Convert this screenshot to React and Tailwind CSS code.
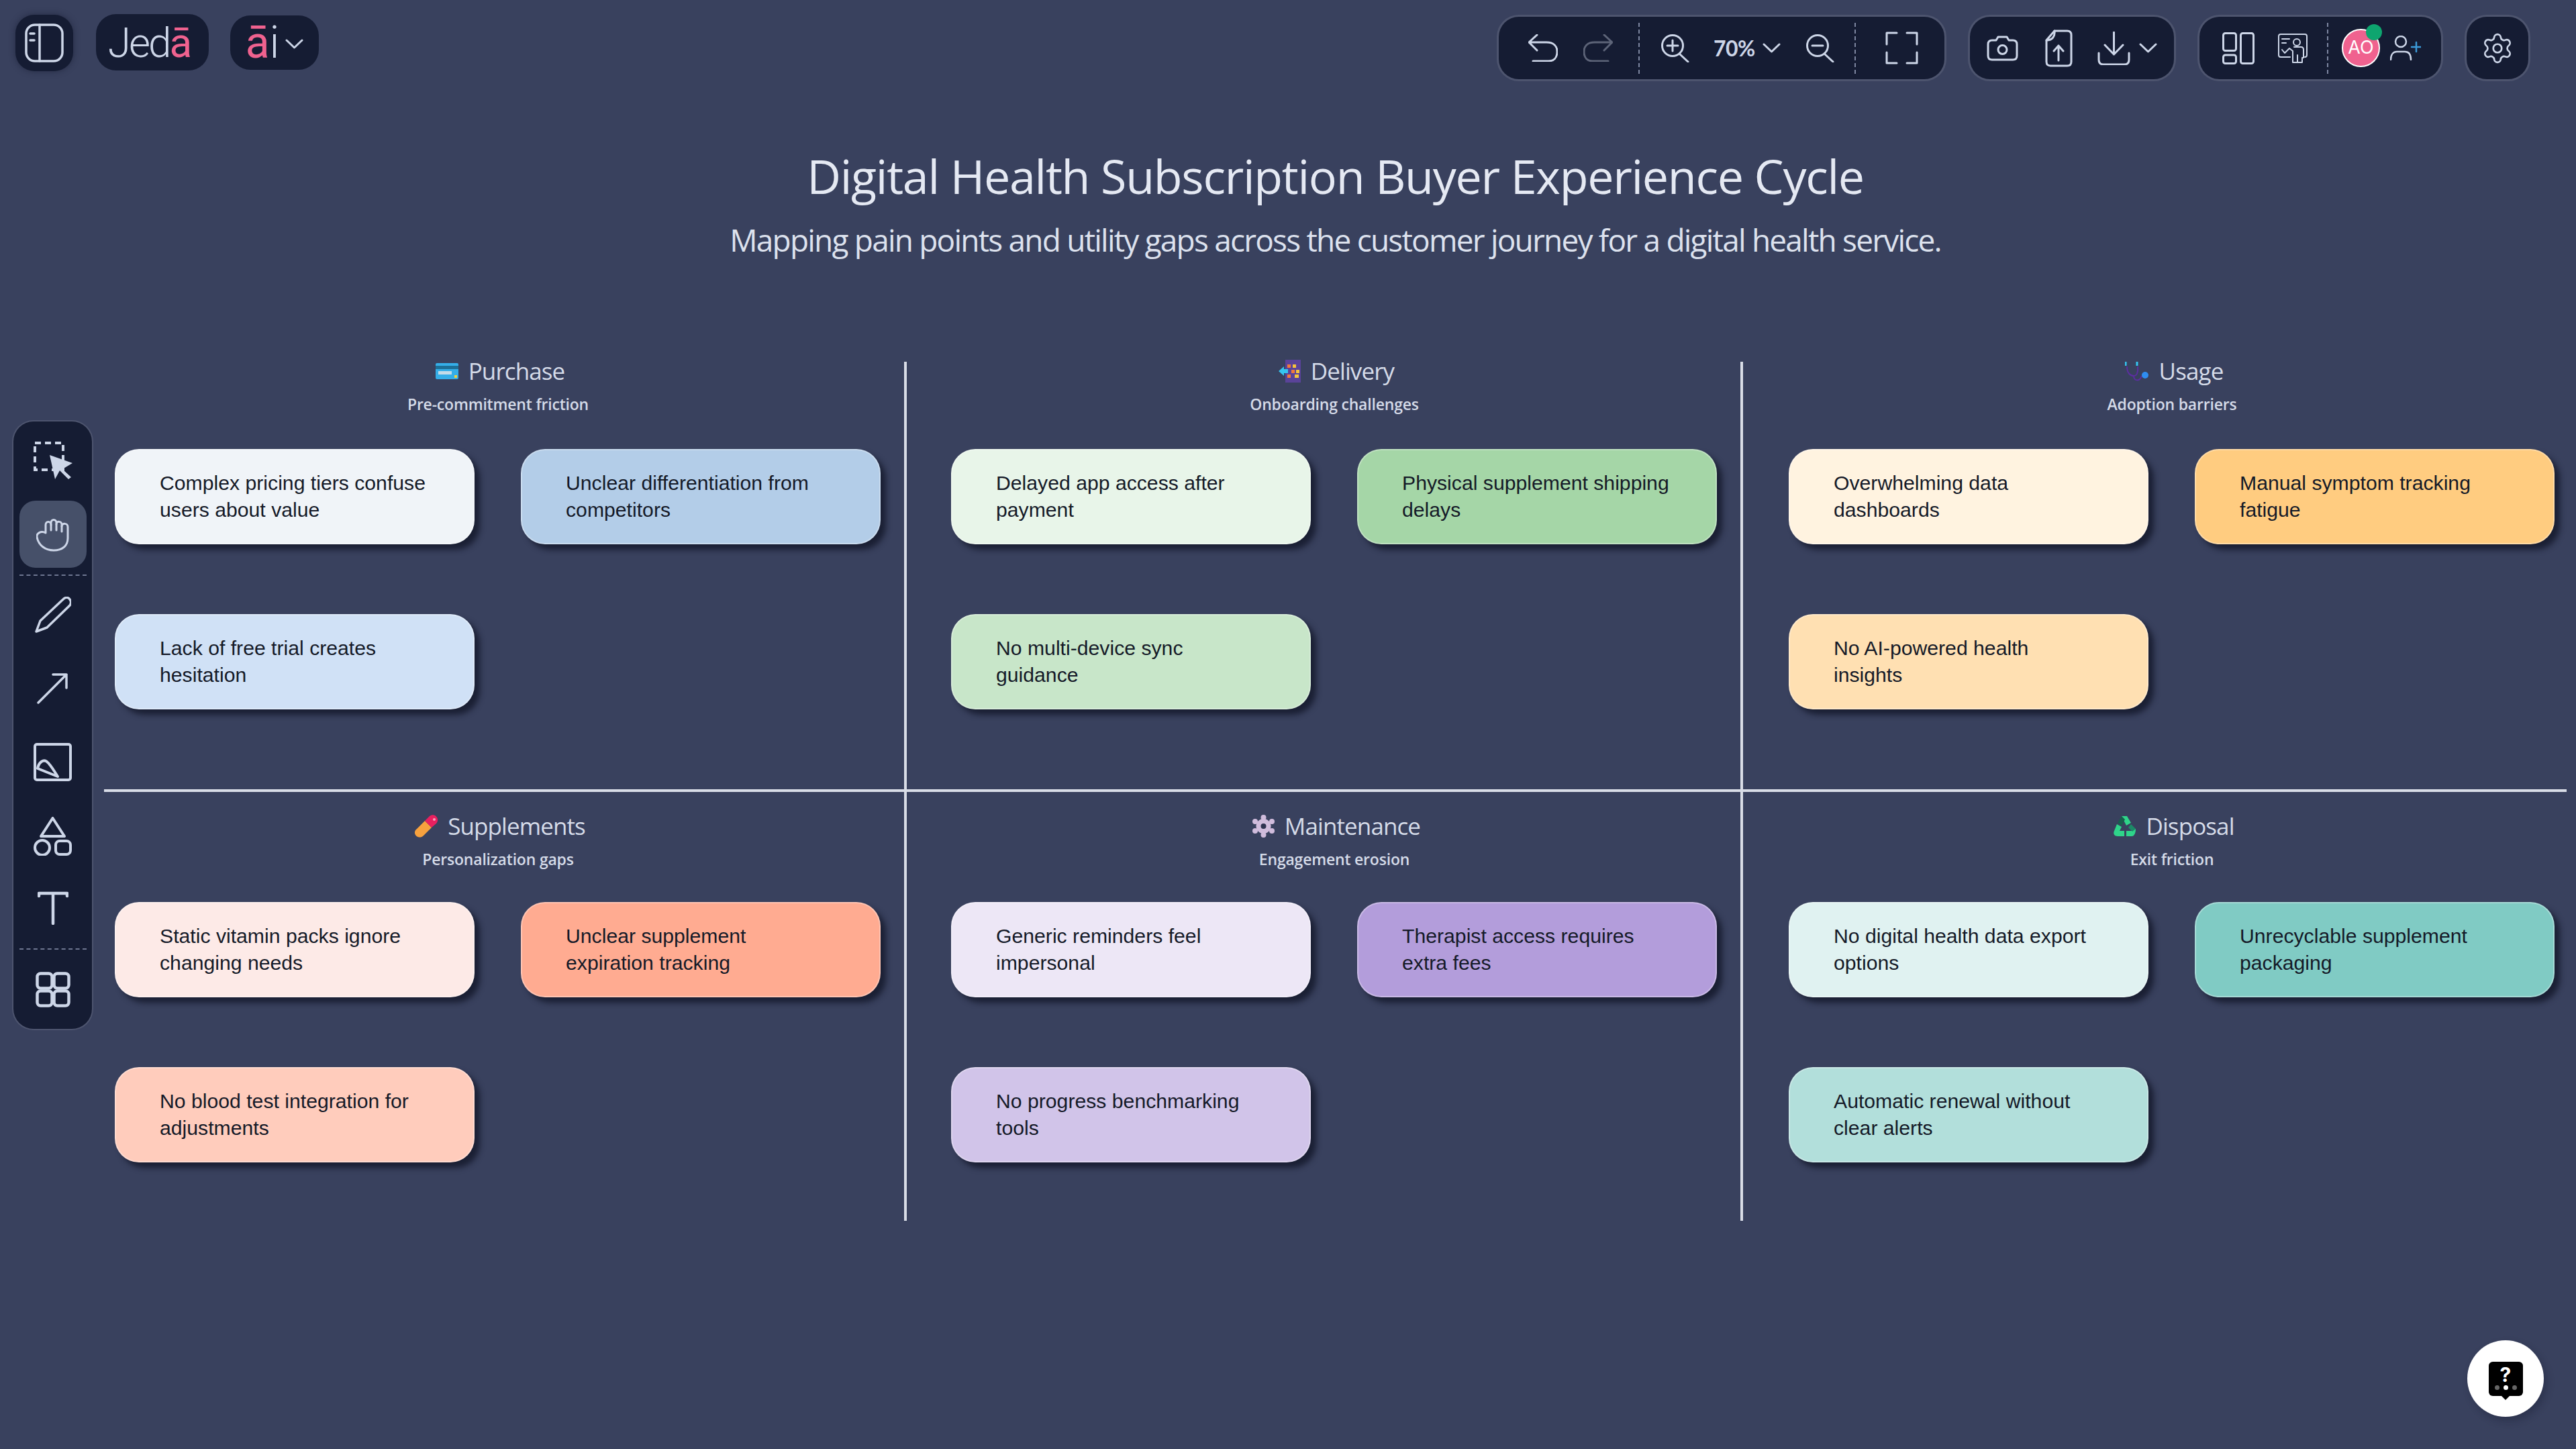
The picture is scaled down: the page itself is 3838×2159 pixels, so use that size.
import { Settings } from 'lucide-react';

const rows = [
  [
    {
      title: 'Purchase', sub: 'Pre-commitment friction', icon: 'card', pad: 'pl-[16px]',
      notes: [
        ['Complex pricing tiers confuse\nusers about value', 'bg-[#f0f4f8]'],
        ['Unclear differentiation from\ncompetitors', 'bg-[#b3cde8]'],
        ['Lack of free trial creates\nhesitation', 'bg-[#d0e1f6]'],
      ],
    },
    {
      title: 'Delivery', sub: 'Onboarding challenges', icon: 'abacus', pad: 'pl-[66px]',
      notes: [
        ['Delayed app access after\npayment', 'bg-[#e8f5e9]'],
        ['Physical supplement shipping\ndelays', 'bg-[#a5d6a7]'],
        ['No multi-device sync\nguidance', 'bg-[#c8e6c9]'],
      ],
    },
    {
      title: 'Usage', sub: 'Adoption barriers', icon: 'stetho', pad: 'pl-[68px]',
      notes: [
        ['Overwhelming data\ndashboards', 'bg-[#fff3e0]'],
        ['Manual symptom tracking\nfatigue', 'bg-[#ffcc80]'],
        ['No AI-powered health\ninsights', 'bg-[#ffe0b2]'],
      ],
    },
  ],
  [
    {
      title: 'Supplements', sub: 'Personalization gaps', icon: 'pill', pad: 'pl-[16px]',
      notes: [
        ['Static vitamin packs ignore\nchanging needs', 'bg-[#fdeae7]'],
        ['Unclear supplement\nexpiration tracking', 'bg-[#ffab91]'],
        ['No blood test integration for\nadjustments', 'bg-[#ffccbc]'],
      ],
    },
    {
      title: 'Maintenance', sub: 'Engagement erosion', icon: 'gear', pad: 'pl-[66px]',
      notes: [
        ['Generic reminders feel\nimpersonal', 'bg-[#ede7f6]'],
        ['Therapist access requires\nextra fees', 'bg-[#b39ddb]'],
        ['No progress benchmarking\ntools', 'bg-[#d1c4e9]'],
      ],
    },
    {
      title: 'Disposal', sub: 'Exit friction', icon: 'recycle', pad: 'pl-[68px]',
      notes: [
        ['No digital health data export\noptions', 'bg-[#e0f2f1]'],
        ['Unrecyclable supplement\npackaging', 'bg-[#80cbc4]'],
        ['Automatic renewal without\nclear alerts', 'bg-[#b2dfdb]'],
      ],
    },
  ],
];

const Line = ({ w, h, children, sw = 3, className = '' }) => (
  <svg width={w} height={h} viewBox={`0 0 ${w} ${h}`} fill="none" stroke="currentColor" strokeWidth={sw} strokeLinecap="round" strokeLinejoin="round" className={`shrink-0 ${className}`}>
    {children}
  </svg>
);

const Chevron = ({ className = '' }) => (
  <Line w={27} h={15} className={className}><path d="M2 2 L13.5 13 L25 2" /></Line>
);

const Dash = ({ className = '' }) => <div className={`h-[76px] border-l-2 border-dashed border-[#7d86a0] ${className}`} />;

const Emoji = ({ name }) => {
  if (name === 'card') return (
    <svg width="34" height="24" viewBox="0 0 34 24" className="shrink-0">
      <rect width="34" height="24" rx="2" fill="#35aee8" />
      <rect y="4" width="34" height="5" fill="#1d6f96" />
      <rect x="4" y="12" width="20" height="5" fill="#c3dbe8" />
      <rect x="28" y="18" width="4" height="4" fill="#f4d13d" />
    </svg>
  );
  if (name === 'abacus') return (
    <svg width="33" height="34" viewBox="0 0 33 34" className="shrink-0">
      <rect x="10" width="23" height="34" fill="#5a4399" />
      <g fill="#f2793a">
        <rect x="13" y="7" width="5" height="5" /><rect x="13" y="22" width="5" height="5" />
      </g>
      <g fill="#f6c33b">
        <rect x="21" y="7" width="5" height="5" /><rect x="19" y="15" width="5" height="5" fill="#f2793a" /><rect x="26" y="15" width="5" height="5" /><rect x="24" y="22" width="6" height="5" />
      </g>
      <path d="M0 17 L8 10 V14 H14 V20 H8 V24 Z" fill="#35c5f0" />
    </svg>
  );
  if (name === 'stetho') return (
    <svg width="36" height="31" viewBox="0 0 36 31" fill="none" className="shrink-0">
      <path d="M3 8 C3 18 8 22 13 22 C18 22 20 16 19 8" stroke="#5b2ea0" strokeWidth="2" />
      <path d="M13 22 C13 30 22 31 25 22" stroke="#5b2ea0" strokeWidth="2" />
      <path d="M1 1 V7 M18 1 V7" stroke="#35c5f0" strokeWidth="3" />
      <circle cx="30" cy="21" r="5" fill="#2f8df0" />
    </svg>
  );
  if (name === 'pill') return (
    <svg width="34" height="34" viewBox="0 0 34 34" className="shrink-0">
      <path d="M15 9 L25 19 L13 31 C9 35 3 34 1 30 C-1 27 0 23 3 21 Z" fill="#f7a13e" />
      <path d="M15 9 L22 2 C26 -1 31 0 33 4 C35 7 34 11 32 13 L25 19 Z" fill="#e8205f" />
      <circle cx="29" cy="7" r="2" fill="#f6a0bd" />
    </svg>
  );
  if (name === 'gear') return (
    <svg width="33" height="34" viewBox="0 0 33 34" className="shrink-0">
      <g fill="#d0bcdc">
        <circle cx="16.5" cy="17" r="11" />
        <circle cx="16.5" cy="4" r="4" /><circle cx="16.5" cy="30" r="4" />
        <circle cx="4" cy="10" r="4" /><circle cx="29" cy="10" r="4" />
        <circle cx="4" cy="24" r="4" /><circle cx="29" cy="24" r="4" />
      </g>
      <circle cx="16.5" cy="17" r="4" fill="#2e3350" />
    </svg>
  );
  return (
    <svg width="33" height="32" viewBox="0 0 33 32" className="shrink-0">
      <path d="M12 1 H20 L26 11 L19 15 L15 7 Z" fill="#2fd48a" />
      <path d="M12 1 L6 11 L12 15 L17 6 Z" fill="#175f4c" />
      <path d="M5 13 L12 17 L9 23 H16 V31 H6 C1 31 -1 27 1 23 Z" fill="#2fd48a" />
      <path d="M19 23 H27 L33 20 C33 26 31 31 27 31 H19 Z" fill="#2fd48a" />
      <path d="M26 13 L33 20 L28 24 L22 18 Z" fill="#1c8a67" />
    </svg>
  );
};

const Note = ({ text, color }) => (
  <div className={`flex h-[142px] w-[536px] items-center rounded-[36px] border-2 border-white/30 pl-[65px] font-['Liberation_Sans',sans-serif] text-[30.2px] leading-[40px] whitespace-pre-line text-[#151a28] shadow-[8px_8px_9px_rgba(16,20,38,0.75)] ${color}`}>
    {text}
  </div>
);

const Cell = ({ cell, lower, last }) => (
  <div className={`${cell.pad} ${last ? '' : 'border-r-4 border-[#d9dde7]'} ${lower ? 'h-[639px] pt-[37px]' : 'h-[641px] border-b-4 border-b-[#d9dde7]'}`}>
    <div className="flex w-[1142px] flex-col items-center">
      <div className="flex h-[28px] items-center gap-[15px] pl-[6px]">
        <Emoji name={cell.icon} />
        <span className="text-[35px] font-medium tracking-[-0.9px] text-[#d5dbe8]">{cell.title}</span>
      </div>
      <p className="mt-[20px] h-[30px] text-[23px] leading-[30px] font-semibold tracking-[-0.2px] text-[#d5dbe8]">{cell.sub}</p>
    </div>
    <div className={`${lower ? 'mt-[49px]' : 'mt-[52px]'} grid grid-cols-[536px_536px] gap-x-[69px] gap-y-[104px]`}>
      {cell.notes.map(([text, color]) => <Note key={text} text={text} color={color} />)}
    </div>
  </div>
);

const Tool = ({ className = '', children }) => <div className={`flex justify-center ${className}`}>{children}</div>;

const Group = ({ className = '', children }) => (
  <div className={`flex h-[93px] items-center rounded-[30px] bg-[#151c33] text-[#cdd6e8] ring-[3px] ring-white/10 ${className}`}>
    {children}
  </div>
);

export default function App() {
  return (
    <div className="relative h-[2159px] w-[3838px] overflow-hidden bg-[#39415e] font-['Open_Sans',sans-serif]">
      {/* top bar */}
      <header className="flex items-start justify-between pt-[21px] pr-[71px] pl-[23px]">
        <div className="flex items-start">
          <div className="mt-[1px] flex h-[84px] w-[86px] items-center justify-center rounded-[28px] bg-[#151c33] text-[#cdd6e8] shadow-[0_0_10px_rgba(15,20,40,0.5)]">
            <Line w={58} h={58} sw={3.5}>
              <rect x="2" y="2" width="54" height="54" rx="13" />
              <path d="M22 2 V56 M8 15 H14 M8 25 H14" />
            </Line>
          </div>
          <div className="ml-[34px] flex h-[84px] w-[168px] items-center justify-center rounded-[30px] bg-[#151c33] pr-[10px] font-['Roboto',sans-serif] text-[62px] font-light tracking-[-3px] text-[#cdd6e8]">
            Jed<span className="font-normal text-[#f0628f]">ā</span>
          </div>
          <div className="mt-[2px] ml-[32px] flex h-[81px] w-[132px] items-center justify-center gap-[9px] rounded-[30px] bg-[#151c33] font-['Roboto',sans-serif] text-[66px] font-light text-[#cdd6e8]">
            <span><span className="font-normal text-[#f0628f]">ā</span>i</span>
            <Chevron className="mt-[4px]" />
          </div>
        </div>

        <div className="mt-[4px] flex gap-[38px]">
          <Group className="pr-[39px] pl-[44px]">
            <Line w={44} h={41}><path d="M13 1 L1 12 L13 24 M1 12 H27 C38 12 43 18 43 26 C43 35 38 40 30 40 H7" /></Line>
            <Line w={44} h={41} className="ml-[38px] text-[#5d6478]"><path d="M31 1 L43 12 L31 24 M43 12 H17 C6 12 1 18 1 26 C1 35 6 40 14 40 H37" /></Line>
            <Dash className="ml-[38px]" />
            <Line w={42} h={42} className="ml-[32px]"><circle cx="17" cy="17" r="15.5" /><path d="M27 29 L40 41 M17 9 V25 M9 17 H25" /></Line>
            <span className="ml-[36px] w-[60px] font-['Lato',sans-serif] text-[32px] font-bold tracking-[-0.5px] whitespace-nowrap">70%</span>
            <Chevron className="ml-[13px]" />
            <Line w={42} h={42} className="ml-[38px]"><circle cx="17" cy="17" r="15.5" /><path d="M27 29 L40 41 M9 17 H25" /></Line>
            <Dash className="ml-[30px]" />
            <Line w={49} h={49} className="ml-[44px]"><path d="M17 2 H2 V19 M32 2 H47 V19 M2 31 V47 H17 M47 31 V47 H32" /></Line>
          </Group>

          <Group className="pr-[25px] pl-[25px]">
            <Line w={47} h={38}>
              <path d="M14 7 L17 2 H30 L33 7 H39 C43 7 45 9 45 13 V30 C45 34 43 36 39 36 H8 C4 36 2 34 2 30 V13 C2 9 4 7 8 7 Z" />
              <circle cx="23.5" cy="21" r="6.5" />
            </Line>
            <Line w={41} h={56} className="ml-[40px]">
              <path d="M14 2 H33 C37 2 39 4 39 8 V48 C39 52 37 54 33 54 H8 C4 54 2 52 2 48 V16 Z" />
              <path d="M14 2 C15 10 11 16 2 16 M20 46 V24 M13 32 L20 24 L27 32" />
            </Line>
            <Line w={49} h={50} className="ml-[37px]">
              <path d="M24.5 1 V34 M11 20 L24.5 34 L38 20 M2 32 V42 C2 47 5 49 9 49 H40 C44 49 47 47 47 42 V32" />
            </Line>
            <Chevron className="ml-[13px]" />
          </Group>

          <Group className="pr-[30px] pl-[34px]">
            <Line w={48} h={48}>
              <rect x="1.5" y="1.5" width="19" height="26" rx="3" />
              <rect x="1.5" y="34" width="19" height="12.5" rx="3" />
              <rect x="27.5" y="1.5" width="19" height="45" rx="3" />
            </Line>
            <Line w={44} h={44} sw={2} className="ml-[35px]">
              <path d="M18 35 H4 C2 35 1 34 1 32 V4 C1 2 2 1 4 1 H40 C42 1 43 2 43 4 V32 C43 34 42 35 40 35" />
              <path d="M6 8 H17 M6 14 H12 M6 24 L10 29 L17 22 L22 26 V43 H36 V36 H38 V24 C38 21 36 20 34 20 H24" />
              <circle cx="28" cy="13" r="5" />
              <path d="M29 43 V32" />
            </Line>
            <Dash className="ml-[29px]" />
            <div className="relative ml-[20px]">
              <div className="flex h-[57px] w-[57px] items-center justify-center rounded-full border-2 border-white bg-[#f0628f] font-['Inter',sans-serif] text-[27px] text-white">AO</div>
              <div className="absolute -top-[7px] -right-[3px] h-[24px] w-[24px] rounded-full bg-[#0ea56f]" />
            </div>
            <Line w={46} h={37} sw={2.5} className="ml-[15px]">
              <circle cx="16" cy="9" r="8" />
              <path d="M1 36 C1 28 5 24 10 24 H22 C28 24 31 28 31 36" />
              <path d="M39 10 V24 M32 17 H46" stroke="#3b9ad9" />
            </Line>
          </Group>

          <Group className="w-[92px] justify-center">
            <Settings size={50} strokeWidth={1.3} />
          </Group>
        </div>
      </header>

      {/* board */}
      <main className="ml-[155px] w-[3669px]">
        <h1 className="mt-[104px] text-center text-[70px] leading-[80px] tracking-[-1.3px] text-[#e5e9f3]">Digital Health Subscription Buyer Experience Cycle</h1>
        <p className="mt-[25px] text-center text-[46px] leading-[60px] tracking-[-1.8px] text-[#dde2ee]">Mapping pain points and utility gaps across the customer journey for a digital health service.</p>
        <div className="mt-[152px] grid grid-cols-[1196px_1246px_1227px]">
          {rows.map((row, r) =>
            row.map((cell, c) => <Cell key={cell.title} cell={cell} lower={r === 1} last={c === 2} />)
          )}
        </div>
      </main>

      {/* left tools */}
      <aside className="absolute top-[628px] left-[20px] w-[117px] rounded-[30px] bg-[#151c33] pt-[30px] pb-[32px] text-[#cdd6e8] ring-2 ring-white/10">
        <Tool>
          <svg width="58" height="56" viewBox="0 0 58 56" fill="none" className="shrink-0">
            <rect x="2" y="2" width="42" height="40" stroke="currentColor" strokeWidth="4" strokeDasharray="9 6" />
            <path d="M24 20 L58 32 L43 41 L56 53 L52 56 L39 43 L32 56 Z" fill="currentColor" />
          </svg>
        </Tool>
        <Tool className="mt-[32px]">
          <div className="flex h-[100px] w-[100px] items-center justify-center rounded-[24px] bg-[#465069]">
            <Line w={49} h={52}>
              <path d="M14 24 V12 C14 6 22 6 22 12 V9 C22 3 30 3 30 9 V11 C30 6 38 6 38 12 V14 C38 9 47 9 47 15 V32 C47 44 38 50 26 50 C13 50 3 42 1 30 C0 25 7 20 14 24" />
              <path d="M22 12 V20 M30 11 V20 M38 14 V22" />
            </Line>
          </div>
        </Tool>
        <div className="mx-auto mt-[10px] w-[100px] border-t-2 border-dashed border-[#6d7690]" />
        <Tool className="mt-[31px]">
          <Line w={54} h={54} sw={3.5}>
            <path d="M2 52 L8 36 L42 4 C46 0 50 1 52 4 C55 8 54 11 51 14 L18 46 Z" />
          </Line>
        </Tool>
        <Tool className="mt-[59px]">
          <Line w={47} h={47} sw={3.5}><path d="M2 45 L44 3 M24 3 H44 V23" /></Line>
        </Tool>
        <Tool className="mt-[58px]">
          <Line w={57} h={57} sw={4}>
            <rect x="2" y="2" width="53" height="53" rx="3" />
            <path d="M6 38 C8 28 15 24 20 28 C26 33 32 44 36 50 Z" />
          </Line>
        </Tool>
        <Tool className="mt-[53px]">
          <Line w={57} h={58} sw={4}>
            <path d="M28.5 2 L46 29 H11 Z" />
            <circle cx="13" cy="46" r="11" />
            <rect x="33" y="36" width="22" height="20" rx="6" />
          </Line>
        </Tool>
        <Tool className="mt-[53px]">
          <Line w={46} h={50} sw={4.5}><path d="M2 3 H44 M23 3 V48 M2 3 V7 M44 3 V7" /></Line>
        </Tool>
        <div className="mx-auto mt-[35px] w-[100px] border-t-2 border-dashed border-[#6d7690]" />
        <Tool className="mt-[33px]">
          <Line w={52} h={53} sw={4.5}>
            <rect x="2.5" y="2.5" width="22" height="22" rx="5" />
            <rect x="27.5" y="2.5" width="22" height="22" rx="5" />
            <rect x="2.5" y="28.5" width="22" height="22" rx="5" />
            <rect x="27.5" y="28.5" width="22" height="22" rx="5" />
          </Line>
        </Tool>
      </aside>

      {/* help */}
      <button className="absolute right-[48px] bottom-[48px] flex h-[114px] w-[114px] items-center justify-center rounded-full bg-white shadow-[4px_6px_12px_rgba(15,20,40,0.3)]">
        <div className="relative flex h-[51px] w-[51px] flex-col items-center rounded-[6px] bg-black">
          <span className="mt-[4px] font-['Inter',sans-serif] text-[30px] leading-[30px] font-bold text-white">?</span>
          <div className="mt-[1px] flex gap-[6px]">
            <span className="h-[7px] w-[7px] rounded-full bg-[#666]" />
            <span className="h-[7px] w-[7px] rounded-full bg-white" />
            <span className="h-[7px] w-[7px] rounded-full bg-[#666]" />
          </div>
          <span className="absolute -bottom-[6px] h-0 w-0 border-x-[6px] border-t-[6px] border-x-transparent border-t-black" />
        </div>
      </button>
    </div>
  );
}
